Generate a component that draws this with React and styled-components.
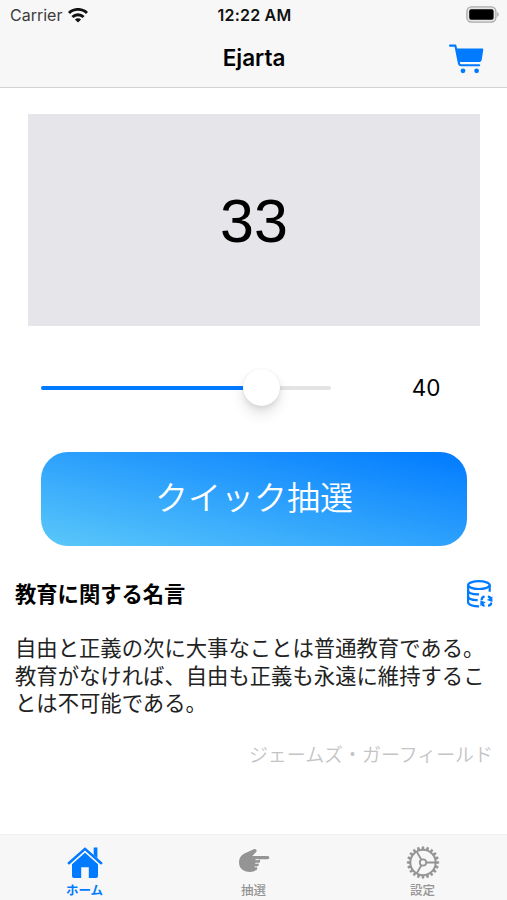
import React from 'react'
import styled, { createGlobalStyle } from 'styled-components'


const GlobalStyle = createGlobalStyle`
    * {
        box-sizing: border-box;
    }

    body {
        margin: 0;
        background: white;
        color: black;
        font-family: Inter, "Noto Sans CJK JP", sans-serif;
    }

    svg {
        display: block;
    }
`

const Screen = styled.div`
    width: 507px;
    height: 900px;
    display: flex;
    flex-direction: column;
    overflow: hidden;
`

const Header = styled.header`
    height: 88px;
    flex: none;
    background-color: #f7f7f7;
    border-bottom: 1px solid #d2d2d3;
`

const StatusBar = styled.div`
    height: 30px;
    padding: 0 8px 0 10px;
    display: grid;
    grid-template-columns: 1fr auto 1fr;
    align-items: center;
`

const Carrier = styled.div`
    display: flex;
    align-items: center;
    gap: 6px;
    font-size: 16px;
    color: #3c3c3c;
`

const Clock = styled.div`
    font-size: 16px;
    font-weight: 600;
    letter-spacing: 0.2px;
    color: #111;
`

const BatterySlot = styled.div`
    display: flex;
    justify-content: flex-end;
    padding-bottom: 2px;
`

const NavBar = styled.div`
    height: 57px;
    padding: 0 23px;
    display: grid;
    grid-template-columns: 1fr auto 1fr;
    align-items: center;
`

const Title = styled.h1`
    grid-column: 2;
    margin: 0;
    padding: 0 0 2px 1px;
    font-size: 22.5px;
    font-weight: 600;
`

const IconButton = styled.button`
    padding: 0;
    border: none;
    background: none;
    color: #007aff;
    cursor: pointer;
    justify-self: end;
`

const Content = styled.main`
    flex: 1;
    display: flex;
    flex-direction: column;
`

const ResultBox = styled.div`
    height: 212px;
    margin: 26px 27px 0 28px;
    padding-top: 3px;
    display: flex;
    justify-content: center;
    align-items: center;
    background-color: #e5e5ea;
    font-family: "Liberation Sans", sans-serif;
    font-size: 61px;
    line-height: 1;
`

const SliderRow = styled.div`
    height: 40px;
    margin: 41px 41px 0;
    display: flex;
    align-items: center;
`

const Track = styled.div`
    width: 290px;
    height: 4px;
    margin-top: 1px;
    border-radius: 2px;
    display: flex;
    align-items: center;
    background-color: #e4e4e5;
`

const Filled = styled.div`
    height: 4px;
    border-radius: 2px;
    background-color: #007aff;
`

const Knob = styled.div`
    width: 37px;
    height: 37px;
    margin-left: -1px;
    flex: none;
    border-radius: 50%;
    background-color: white;
    box-shadow: 0 0 1px rgba(0,0,0,0.12), 0 3px 5px rgba(0,0,0,0.07), 0 8px 14px rgba(0,0,0,0.11);
`

const Amount = styled.div`
    flex: 1;
    padding-left: 55px;
    text-align: center;
    font-size: 22.5px;
`

const DrawButton = styled.button`
    height: 94px;
    margin: 45px 40px 0 41px;
    padding: 0 0 6px;
    border: none;
    border-radius: 27px;
    background: linear-gradient(to top right, #5ac8fa, #007aff);
    color: white;
    font-family: "Noto Sans CJK JP", sans-serif;
    font-size: 33px;
    font-weight: 350;
    cursor: pointer;
`

const QuoteHeader = styled.div`
    height: 30px;
    margin-top: 33px;
    padding: 0 14px 0 15px;
    display: flex;
    justify-content: space-between;
    align-items: center;
`

const QuoteTitle = styled.h2`
    margin: 0;
    padding-bottom: 2px;
    font-family: "Noto Sans CJK JP", sans-serif;
    font-size: 21.3px;
    line-height: 28px;
    font-weight: 700;
`

const Quote = styled.p`
    margin: 27px 0 0;
    padding-left: 15px;
    font-family: "Liberation Sans", "Noto Sans CJK JP", sans-serif;
    font-size: 21.35px;
    line-height: 27.5px;
    color: #222;
    white-space: nowrap;
`

const Author = styled.p`
    margin: 21px 14px 0 0;
    text-align: right;
    font-family: "Noto Sans CJK JP", sans-serif;
    font-size: 18.95px;
    line-height: 28px;
    font-weight: 350;
    color: #c4c4c6;
`

const TabBar = styled.nav`
    height: 66px;
    flex: none;
    display: grid;
    grid-template-columns: repeat(3, 1fr);
    background-color: #f7f7f7;
    border-top: 1px solid #f0f0f0;
`

const Tab = styled.div`
    padding-top: 11px;
    display: flex;
    flex-direction: column;
    align-items: center;
    gap: 3px;
    color: ${props => props.$active ? '#007aff' : '#949494'};
    font-family: "Noto Sans CJK JP", sans-serif;
    font-size: 12.5px;
    line-height: 16px;
    font-weight: ${props => props.$active ? 700 : 500};
    cursor: pointer;
`


const WifiIcon = () => (
    <svg width="20" height="15" viewBox="0 0 20 15" fill="none" stroke="#111" strokeWidth="2.9">
        <path d="M1 5C6 .2 14 .2 19 5" />
        <path d="M4.4 9c3.2-3 8-3 11.2 0" />
        <path d="M10 14.6 6.9 11.5c1.8-1.6 4.4-1.6 6.2 0Z" fill="#111" stroke="none" />
    </svg>
)

const BatteryIcon = () => (
    <svg width="33" height="17" viewBox="0 0 33 17">
        <rect x=".9" y=".9" width="29" height="15.2" rx="4.5" fill="#e6e6e6" stroke="#aaa" strokeWidth="1.3" />
        <rect x="3.2" y="3.3" width="24.4" height="10.4" rx="2" fill="black" />
        <path d="M31.1 6c2 .8 2 4.2 0 5Z" fill="#aaa" />
    </svg>
)

const CartIcon = () => (
    <svg width="36" height="30" viewBox="0 0 36 30" fill="currentColor">
        <path d="M2 1.6h5.4l3.6 17.9q.4 1.8 2.2 1.8h18" fill="none" stroke="currentColor" strokeWidth="2.1" strokeLinecap="round" strokeLinejoin="round" />
        <path d="M8.2 4.5h26.3q1 0 .8 1l-1.6 10.6q-.4 1.9-2.3 1.9H10.8Z" />
        <circle cx="15" cy="26.8" r="2.4" />
        <circle cx="28.6" cy="26.8" r="2.4" />
    </svg>
)

const RefreshDataIcon = () => (
    <svg width="27" height="28" viewBox="0 0 27 28" fill="none" stroke="currentColor" strokeWidth="2.2">
        <ellipse cx="12.9" cy="5.1" rx="10.8" ry="3.9" />
        <path d="M2.1 5.1v17.1c0 2.4 4.8 4.2 11 4.2M23.7 5.1v6.7" />
        <path d="M2.1 10.7c.3 2.5 4.9 3.8 11 3.7M2.1 16.6c.3 2.3 4.8 3.6 9.6 3.5" />
        <path d="M15.6 20.2c0-2 1-3.4 3-3.5M21.8 16.7c2 0 3 1.2 3.1 2.8M25.2 22.4c0 2-1 3.2-3.2 3.2M18.6 25.6c-1.7 0-2.7-.9-2.9-2.7" strokeWidth="2.2" />
        <path d="m20.8 19.9 5.6-3.4v5.4ZM19.8 22.3l-5.4 3.6v-5.4Z" fill="currentColor" stroke="none" />
    </svg>
)

const HomeIcon = () => (
    <svg width="36" height="33" viewBox="0 0 36 33" fill="currentColor">
        <path d="M1.8 17.2 18 2.8l16.2 14.4" fill="none" stroke="currentColor" strokeWidth="2.5" strokeLinecap="round" />
        <path d="M26.7 1.6h3.7v10.6l-3.7-3.3Z" />
        <path d="M18 6.8 31 18.3V30q0 2-2 2h-7.2V21.3h-7.6V32H7q-2 0-2-2V18.3Z" />
    </svg>
)

const PointIcon = () => (
    <svg width="32" height="33" viewBox="0 -1 32 33" fill="currentColor">
        <path d="M1 15.5c0-4.2 1.8-7.1 4.9-8.7L15.7 2.2c2.2-.9 4 1.4 2.2 3.1L14.4 8.9h15c2.6 0 2.6 3.4 0 3.4h-8.6c2 .5 1.7 3.6-.4 3.6h-.7c1.6.6 1.4 3.6-.7 3.6h-.7c1.5.6 1.2 3.8-.8 3.8-2 2-6.9 2.1-10.9.6C3 22.6 1 19.6 1 15.5Z" />
        <path d="M17.5 12.6h3.4M17.2 16.2h3M16.6 19.8h2.3" stroke="#f7f7f7" strokeWidth="1" />
    </svg>
)

const teeth = Array.from({ length: 20 }, (_, i) => i * 18)

const GearIcon = () => (
    <svg width="34" height="33" viewBox="0 0 34 33" fill="none" stroke="currentColor" strokeWidth="1.8">
        <circle cx="17" cy="16.5" r="12.6" />
        <circle cx="17" cy="16.5" r="3.2" />
        <path d="M20.2 16.5H30M15.4 13.7 10.5 5.2M15.4 19.3l-4.9 8.5" />
        {teeth.map(angle => (
            <path key={angle} d="M15.7 3.6 16.2.7h1.6l.5 2.9Z" fill="currentColor" strokeWidth=".6" transform={`rotate(${angle} 17 16.5)`} />
        ))}
    </svg>
)


const tabs = [
    { label: 'ホーム', icon: <HomeIcon />, active: true },
    { label: '抽選', icon: <PointIcon /> },
    { label: '設定', icon: <GearIcon /> },
]

const Slider = ({ value }) => {
    return (
        <Track>
            <Filled style={{ width: `${value}%` }} />
            <Knob />
        </Track>
    )
}

const App = () => {
    return (
        <Screen>
            <GlobalStyle />
            <Header>
                <StatusBar>
                    <Carrier>Carrier <WifiIcon /></Carrier>
                    <Clock>12:22 AM</Clock>
                    <BatterySlot><BatteryIcon /></BatterySlot>
                </StatusBar>
                <NavBar>
                    <Title>Ejarta</Title>
                    <IconButton aria-label="カート"><CartIcon /></IconButton>
                </NavBar>
            </Header>

            <Content>
                <ResultBox>33</ResultBox>
                <SliderRow>
                    <Slider value={70} />
                    <Amount>40</Amount>
                </SliderRow>
                <DrawButton>クイック抽選</DrawButton>
                <QuoteHeader>
                    <QuoteTitle>教育に関する名言</QuoteTitle>
                    <IconButton aria-label="更新"><RefreshDataIcon /></IconButton>
                </QuoteHeader>
                <Quote>
                    自由と正義の次に大事なことは普通教育である。<br />
                    教育がなければ、自由も正義も永遠に維持するこ<br />
                    とは不可能である。
                </Quote>
                <Author>ジェームズ・ガーフィールド</Author>
            </Content>

            <TabBar>
                {tabs.map(({ label, icon, active }) => (
                    <Tab key={label} $active={active}>
                        {icon}
                        {label}
                    </Tab>
                ))}
            </TabBar>
        </Screen>
    )
}

export default App
